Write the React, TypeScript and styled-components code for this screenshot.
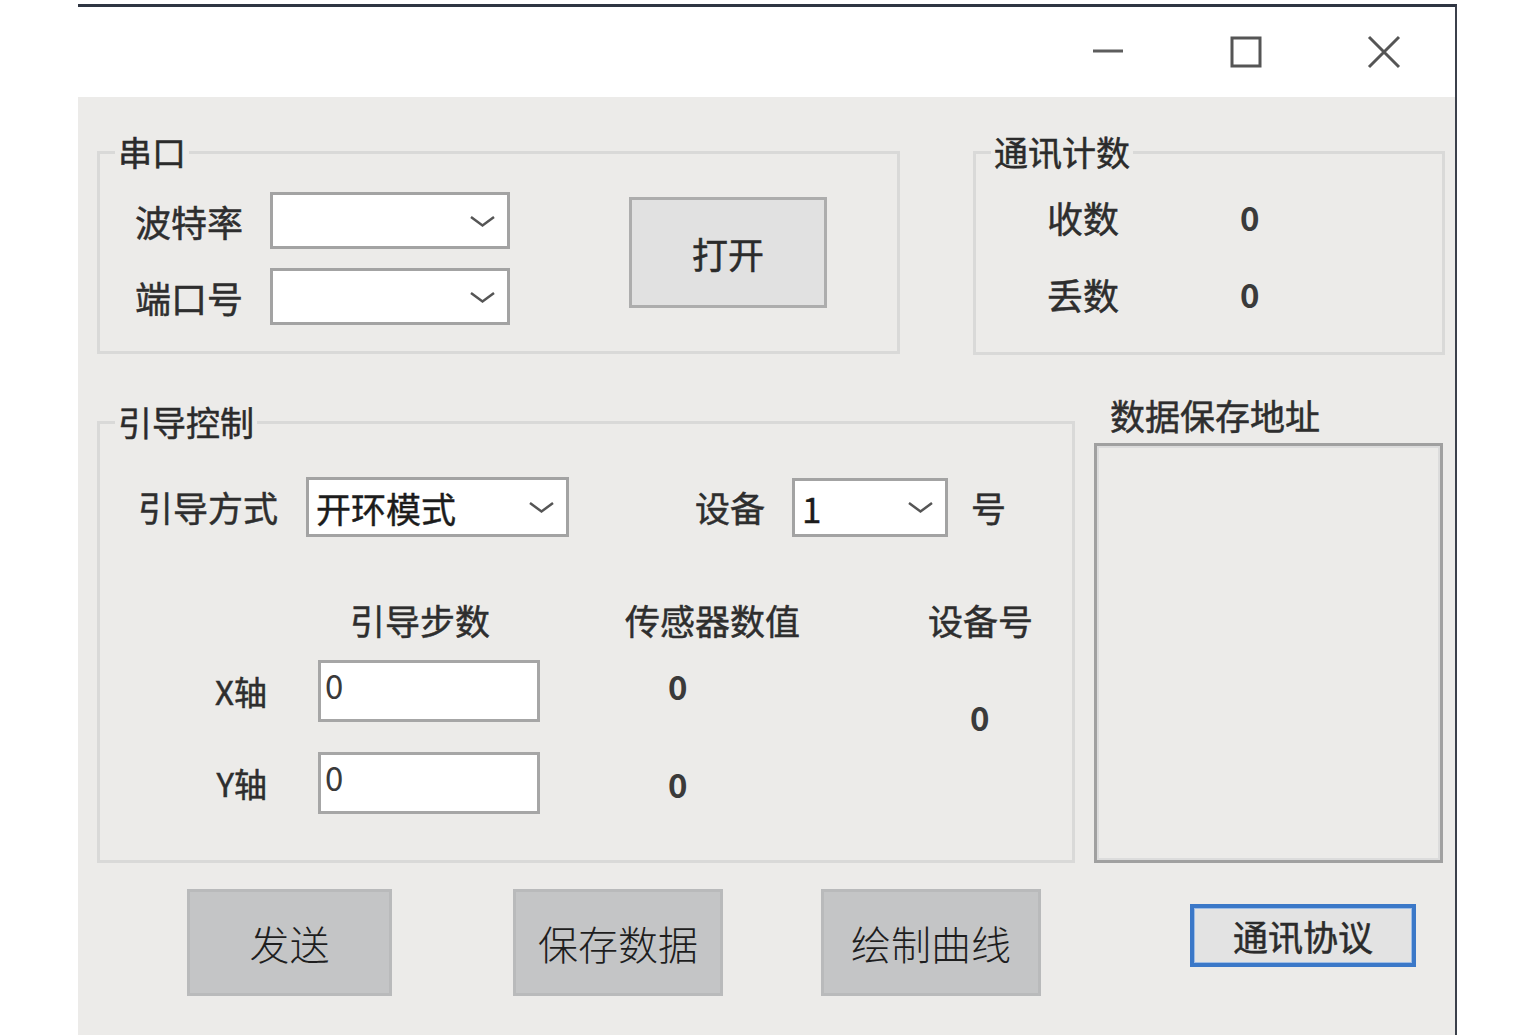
import React from 'react';
import styled, { createGlobalStyle } from 'styled-components';

const GlobalStyle = createGlobalStyle`
  html, body {
    margin: 0;
    padding: 0;
    background: #ffffff;
  }
  body {
    font-family: "Noto Sans CJK SC", "Noto Sans", sans-serif;
    color: #2b2b2b;
  }
  * {
    box-sizing: border-box;
  }
`;

const Window = styled.div`
  margin: 4px 0 0 78px;
  width: 1379px;
  height: 1031px;
  display: flex;
  flex-direction: column;
  border-top: 3px solid #2f3542;
  border-right: 2px solid #3b404b;
  background: #ffffff;
`;

const TitleBar = styled.div`
  height: 90px;
  display: flex;
  justify-content: flex-end;
  padding-right: 2px;
  background: #ffffff;
`;

const CaptionButton = styled.div`
  width: 138px;
  height: 90px;
  display: flex;
  align-items: center;
  justify-content: center;
`;

const Client = styled.div`
  flex: 1;
  background: #ecebe9;
  padding: 37px 0 0 19px;
  display: flex;
  flex-direction: column;
`;

const TopRow = styled.div`
  display: flex;
  gap: 73px;
  align-items: flex-start;
`;

const MiddleRow = styled.div`
  display: grid;
  grid-template-columns: 978px 349px;
  column-gap: 19px;
  margin-top: 40px;
`;

const BottomRow = styled.div`
  display: flex;
  align-items: flex-start;
  margin-top: 26px;
`;

const Group = styled.fieldset<{ $width: number; $top?: number }>`
  margin: ${p => p.$top ?? 0}px 0 0 0;
  padding: 0;
  min-width: 0;
  width: ${p => p.$width}px;
  border: 3px solid #d9d9d8;
`;

const GroupTitle = styled.legend`
  margin-left: 15px;
  padding: 0 3px;
  font-size: 34px;
  line-height: 36px;
  color: #2b2b2b;
  -webkit-text-stroke: 0.5px #2b2b2b;
`;

const SerialBody = styled.div`
  display: flex;
  align-items: flex-start;
  padding: 22px 0 26px 35px;
`;

const FormGrid = styled.div`
  display: grid;
  grid-template-columns: 108px 240px;
  column-gap: 27px;
  row-gap: 19px;
  align-items: center;
`;

const Label = styled.span<{ $size?: number }>`
  font-size: ${p => p.$size ?? 35}px;
  line-height: 40px;
  color: #2e2e2e;
  white-space: nowrap;
  -webkit-text-stroke: 0.5px #2e2e2e;
`;

const Combo = styled.div<{ $w: number; $h: number; $gap?: number }>`
  width: ${p => p.$w}px;
  height: ${p => p.$h}px;
  margin-left: ${p => p.$gap ?? 0}px;
  background: #ffffff;
  border: 3px solid #a3a3a3;
  display: flex;
  align-items: center;
  justify-content: space-between;
  padding: 0 11px 0 7px;
`;

const ComboText = styled.span`
  font-size: 35px;
  line-height: 1;
  color: #1c1c1c;
  white-space: nowrap;
  -webkit-text-stroke: 0.4px #1c1c1c;
`;

const OpenButton = styled.div`
  margin: 5px 0 0 119px;
  width: 198px;
  height: 111px;
  background: #e1e1e1;
  border: 3px solid #adadad;
  display: flex;
  align-items: center;
  justify-content: center;
  font-size: 36px;
  color: #2b2b2b;
  -webkit-text-stroke: 0.5px #2b2b2b;
`;

const CountGrid = styled.div`
  display: grid;
  grid-template-columns: 71px auto;
  column-gap: 122px;
  row-gap: 37px;
  align-items: center;
  padding: 27px 0 38px 71px;
`;

const Digit = styled.span`
  font-size: 33px;
  line-height: 40px;
  font-weight: 700;
  color: #3a3a3a;
`;

const GuideBody = styled.div`
  padding: 37px 0 46px 38px;
`;

const ModeRow = styled.div`
  display: flex;
  align-items: center;
`;

const Spacer = styled.div<{ $w: number }>`
  width: ${p => p.$w}px;
  flex-shrink: 0;
`;

const AxisGrid = styled.div`
  display: grid;
  grid-template-columns: 118px 222px 290px 230px;
  grid-template-rows: 40px 20px 62px 30px 62px;
  margin: 63px 0 0 62px;
`;

const Cell = styled.div<{
  $col: number;
  $row: string;
  $pad?: number;
  $align?: 'start' | 'center' | 'end';
  $top?: number;
}>`
  grid-column: ${p => p.$col};
  grid-row: ${p => p.$row};
  display: flex;
  align-items: ${p => p.$align ?? 'center'};
  padding-left: ${p => p.$pad ?? 0}px;
  padding-top: ${p => p.$top ?? 0}px;
`;

const AxisLabel = styled.span`
  font-size: 33px;
  line-height: 40px;
  color: #2e2e2e;
  width: 67px;
  text-align: right;
  -webkit-text-stroke: 0.5px #2e2e2e;
`;

const TextBox = styled.div`
  width: 222px;
  height: 62px;
  background: #ffffff;
  border: 3px solid #a6a6a6;
  padding: 4px 0 0 4px;
  font-size: 33px;
  line-height: 36px;
  color: #3a3a3a;
`;

const PathColumn = styled.div`
  display: flex;
  flex-direction: column;
`;

const PathLabel = styled.span`
  font-size: 35px;
  line-height: 40px;
  padding-left: 16px;
  color: #2e2e2e;
  -webkit-text-stroke: 0.5px #2e2e2e;
`;

const PathBox = styled.div`
  flex: 1;
  margin-top: 8px;
  border: 3px solid #a0a0a0;
  box-shadow: inset 0 0 0 2px #dcdcdc;
  background: #ecebe9;
`;

const ActionButton = styled.div<{ $w: number; $left: number }>`
  margin-left: ${p => p.$left}px;
  width: ${p => p.$w}px;
  height: 107px;
  background: #c4c5c6;
  border: 3px solid #b9babb;
  display: flex;
  align-items: center;
  justify-content: center;
  font-size: 40px;
  font-weight: 300;
  color: #1e1e1e;
`;

const ProtocolButton = styled.div`
  margin: 15px 0 0 149px;
  width: 226px;
  height: 63px;
  background: #e3e3e3;
  border: 4px solid #3b78c8;
  box-shadow: inset 0 0 0 1px #9ebde6;
  display: flex;
  align-items: center;
  justify-content: center;
  font-size: 35px;
  color: #2b2b2b;
  -webkit-text-stroke: 0.5px #2b2b2b;
`;

const Chevron = () => (
  <svg width="27" height="14" viewBox="0 0 27 14">
    <polyline points="2,3 13.5,11.5 25,3" fill="none" stroke="#555" strokeWidth="2.5" />
  </svg>
);

const App: React.FC = () => {
  return (
    <>
      <GlobalStyle />
      <Window>
        <TitleBar>
          <CaptionButton>
            <svg width="32" height="6" viewBox="0 0 32 6">
              <line x1="1" y1="2" x2="31" y2="2" stroke="#5d5d5d" strokeWidth="3" />
            </svg>
          </CaptionButton>
          <CaptionButton>
            <svg width="32" height="32" viewBox="0 0 32 32">
              <rect x="2" y="2" width="28" height="28" fill="none" stroke="#555" strokeWidth="3" />
            </svg>
          </CaptionButton>
          <CaptionButton>
            <svg width="34" height="34" viewBox="0 0 34 34">
              <path d="M2 2 L32 32 M32 2 L2 32" stroke="#555" strokeWidth="3" />
            </svg>
          </CaptionButton>
        </TitleBar>

        <Client>
          <TopRow>
            <Group $width={803}>
              <GroupTitle>串口</GroupTitle>
              <SerialBody>
                <FormGrid>
                  <Label $size={36}>波特率</Label>
                  <Combo $w={240} $h={57}>
                    <ComboText />
                    <Chevron />
                  </Combo>
                  <Label $size={36}>端口号</Label>
                  <Combo $w={240} $h={57}>
                    <ComboText />
                    <Chevron />
                  </Combo>
                </FormGrid>
                <OpenButton>打开</OpenButton>
              </SerialBody>
            </Group>

            <Group $width={472}>
              <GroupTitle>通讯计数</GroupTitle>
              <CountGrid>
                <Label $size={36}>收数</Label>
                <Digit>0</Digit>
                <Label $size={36}>丢数</Label>
                <Digit>0</Digit>
              </CountGrid>
            </Group>
          </TopRow>

          <MiddleRow>
            <Group $width={978} $top={9}>
              <GroupTitle>引导控制</GroupTitle>
              <GuideBody>
                <ModeRow>
                  <Label>引导方式</Label>
                  <Combo $w={263} $h={60} $gap={28}>
                    <ComboText>开环模式</ComboText>
                    <Chevron />
                  </Combo>
                  <Spacer $w={126} />
                  <Label>设备</Label>
                  <Combo $w={156} $h={59} $gap={27}>
                    <ComboText>1</ComboText>
                    <Chevron />
                  </Combo>
                  <Spacer $w={23} />
                  <Label>号</Label>
                </ModeRow>

                <AxisGrid>
                  <Cell $col={2} $row="1" $pad={32}>
                    <Label>引导步数</Label>
                  </Cell>
                  <Cell $col={3} $row="1" $pad={85}>
                    <Label>传感器数值</Label>
                  </Cell>
                  <Cell $col={4} $row="1" $pad={98}>
                    <Label>设备号</Label>
                  </Cell>

                  <Cell $col={1} $row="3">
                    <AxisLabel>X轴</AxisLabel>
                  </Cell>
                  <Cell $col={2} $row="3">
                    <TextBox>0</TextBox>
                  </Cell>
                  <Cell $col={3} $row="3" $pad={128} $align="start" $top={6}>
                    <Digit>0</Digit>
                  </Cell>

                  <Cell $col={4} $row="3 / span 3" $pad={140} $align="start" $top={37}>
                    <Digit>0</Digit>
                  </Cell>

                  <Cell $col={1} $row="5">
                    <AxisLabel>Y轴</AxisLabel>
                  </Cell>
                  <Cell $col={2} $row="5">
                    <TextBox>0</TextBox>
                  </Cell>
                  <Cell $col={3} $row="5" $pad={128} $align="start" $top={12}>
                    <Digit>0</Digit>
                  </Cell>
                </AxisGrid>
              </GuideBody>
            </Group>

            <PathColumn>
              <PathLabel>数据保存地址</PathLabel>
              <PathBox />
            </PathColumn>
          </MiddleRow>

          <BottomRow>
            <ActionButton $w={205} $left={90}>发送</ActionButton>
            <ActionButton $w={210} $left={121}>保存数据</ActionButton>
            <ActionButton $w={220} $left={98}>绘制曲线</ActionButton>
            <ProtocolButton>通讯协议</ProtocolButton>
          </BottomRow>
        </Client>
      </Window>
    </>
  );
};

export default App;
